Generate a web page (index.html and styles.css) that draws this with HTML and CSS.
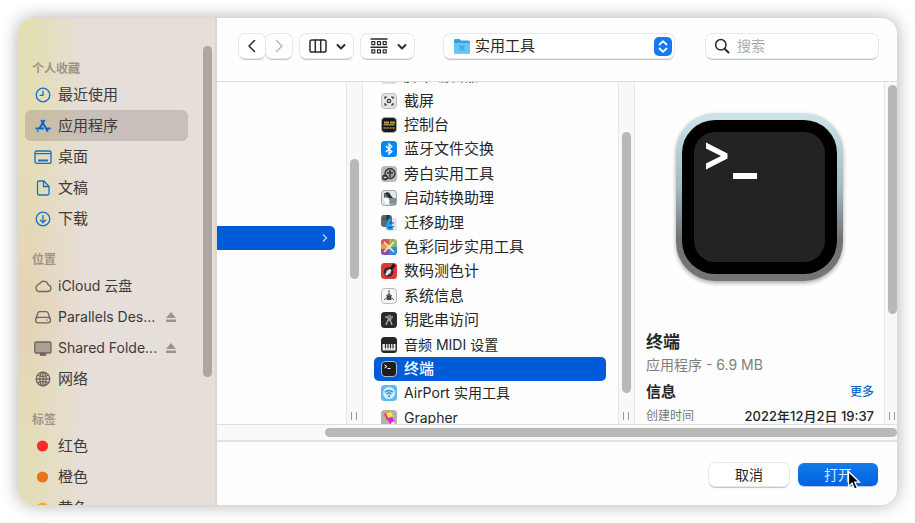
FILE: index.html
```
<!DOCTYPE html>
<html lang="zh-CN">
<head>
<meta charset="utf-8">
<title>打开</title>
<link rel="stylesheet" href="styles.css">
</head>
<body>
<div class="dialog">
  <aside class="sidebar">
    <nav class="places">
      <h2>个人收藏</h2>
      <ul>
        <li><a href="#"><svg class="blue" viewBox="0 0 18 18"><circle cx="9" cy="9" r="6.8"/><path d="M9 4.8V9.4H5.6"/></svg><span>最近使用</span></a></li>
        <li><a href="#" class="current"><svg class="blue" viewBox="0 0 18 18"><path d="M7.200 3 13.900 14.800M10.500 3 5.400 11.600M1.600 11.400H9.800M13 11.400h3.600M4 13.700l-.6 1"/></svg><span>应用程序</span></a></li>
        <li><a href="#"><svg class="blue" viewBox="0 0 18 18"><rect x="1" y="3" width="16" height="12.4" rx="2"/><path d="M1 5.6h16"/><path stroke-width="2" d="M4 12.4h10"/></svg><span>桌面</span></a></li>
        <li><a href="#"><svg class="blue" viewBox="0 0 18 18"><path d="M5 2h4.8L15 7.2V14.500a1.500 1.500 0 0 1-1.500 1.500H5a1.500 1.500 0 0 1-1.500-1.500v-11A1.500 1.500 0 0 1 5 2zM9.500 2.200V7.500h5.300"/></svg><span>文稿</span></a></li>
        <li><a href="#"><svg class="blue" viewBox="0 0 18 18"><circle cx="9" cy="9" r="6.8"/><path d="M9 5v7.500M6 9.700l3 3 3-3"/></svg><span>下载</span></a></li>
      </ul>
      <h2>位置</h2>
      <ul>
        <li><a href="#"><svg class="gray" viewBox="0 0 18 18"><path d="M4.500 14.500A3.600 3.600 0 0 1 3.600 8 3.200 3.200 0 0 1 6 6.300a4.500 4.500 0 0 1 8.200 1.500A3.400 3.400 0 0 1 14 14.500z"/></svg><span class="latin">iCloud 云盘</span></a></li>
        <li><a href="#"><svg class="gray" viewBox="0 0 18 18"><path d="M2 10.500 4 4.800A1.800 1.800 0 0 1 5.700 3.600h6.600A1.800 1.800 0 0 1 14 4.800l2 5.700"/><rect x="1.600" y="9.400" width="14.800" height="5.400" rx="2.400"/><path d="M12.500 12.100h1.200"/></svg><span class="latin">Parallels Des...</span><svg class="eject" viewBox="0 0 12 12"><path d="M6 1l5 6H1zM1 8.500h10v2.500H1z"/></svg></a></li>
        <li><a href="#"><svg class="gray" viewBox="0 0 18 18"><rect x=".8" y="3" width="16.200" height="11" rx="1.200" fill="#aaa194"/><path fill="#645e56" d="M6.500 14.500h5v1.700h-5z"/></svg><span class="latin">Shared Folde...</span><svg class="eject" viewBox="0 0 12 12"><path d="M6 1l5 6H1zM1 8.500h10v2.500H1z"/></svg></a></li>
        <li><a href="#"><svg class="gray" viewBox="0 0 18 18"><circle cx="9" cy="9" r="6.800"/><ellipse cx="9" cy="9" rx="3.200" ry="6.800"/><path d="M9 2v14M2.200 9h13.600M3.800 5.200c3 1.600 7.400 1.600 10.400 0M3.800 12.800c3-1.600 7.400-1.600 10.400 0"/></svg><span>网络</span></a></li>
      </ul>
      <h2>标签</h2>
      <ul>
        <li><a href="#"><svg viewBox="0 0 18 18"><circle cx="8.500" cy="9" r="5.600" fill="#fb2c24"/></svg><span>红色</span></a></li>
        <li><a href="#"><svg viewBox="0 0 18 18"><circle cx="8.500" cy="9" r="5.600" fill="#e8751c"/></svg><span>橙色</span></a></li>
        <li><a href="#"><svg viewBox="0 0 18 18"><circle cx="8.500" cy="9" r="5.600" fill="#edb125"/></svg><span>黄色</span></a></li>
      </ul>
    </nav>
    <div class="side-scroll"><div class="thumb"></div></div>
  </aside>

  <main>
    <header class="toolbar">
      <div class="history">
        <button type="button" aria-label="后退"><svg width="12" height="16" viewBox="0 0 12 16"><path d="M8.500 2.500 3 8l5.500 5.500"/></svg></button>
        <button type="button" aria-label="前进" disabled><svg width="12" height="16" viewBox="0 0 12 16"><path d="M3.500 2.500 9 8l-5.500 5.500"/></svg></button>
      </div>
      <button type="button" class="view" aria-label="分栏显示"><svg width="18" height="16" viewBox="0 0 18 16"><rect x="1" y="2" width="16" height="12" rx="1.800"/><path d="M6.300 2v12M11.700 2v12"/></svg><svg width="10" height="16" viewBox="0 0 10 16"><path stroke-width="2" d="M1.500 7 5 10.500 8.500 7"/></svg></button>
      <button type="button" class="view" aria-label="分组"><svg width="18" height="18" viewBox="0 0 18 18"><path d="M1 2h16M1 10.200h16"/><g stroke-width="1.200"><rect x="1.800" y="4.600" width="3" height="3"/><rect x="7.500" y="4.600" width="3" height="3"/><rect x="13.200" y="4.600" width="3" height="3"/><rect x="1.800" y="12.800" width="3" height="3"/><rect x="7.500" y="12.800" width="3" height="3"/><rect x="13.200" y="12.800" width="3" height="3"/></g></svg><svg width="10" height="16" viewBox="0 0 10 16"><path stroke-width="2" d="M1.500 7 5 10.500 8.500 7"/></svg></button>
      <div class="path">
        <select aria-label="位置"><option>实用工具</option></select>
        <svg class="folder" width="18" height="18" viewBox="0 0 18 18"><path fill="#37a3d8" d="M1 3.500A1.500 1.500 0 0 1 2.500 2h4l1.500 1.500h7.500A1.500 1.500 0 0 1 17 5v10.500a1 1 0 0 1-1 1H2a1 1 0 0 1-1-1z"/><path fill="#67c5f5" d="M1 6h16v9.500a1 1 0 0 1-1 1H2a1 1 0 0 1-1-1z"/><path stroke="#3b9dd3" stroke-width="1.200" fill="none" d="m6.500 8.500 5 5M11.500 8.500l-5 5"/></svg>
        <svg class="updown" width="18" height="19" viewBox="0 0 18 19"><rect width="18" height="19" rx="5" fill="#157af0"/><path fill="none" stroke="#fff" stroke-width="1.800" stroke-linecap="round" stroke-linejoin="round" d="M5.500 7.500 9 4.200l3.500 3.300M5.500 11.500 9 14.800l3.500-3.300"/></svg>
      </div>
      <label class="search">
        <svg width="16" height="16" viewBox="0 0 16 16"><circle cx="6.800" cy="6.800" r="5.200"/><path stroke-width="2" d="m10.700 10.700 3.800 3.800"/></svg>
        <input type="search" placeholder="搜索" aria-label="搜索">
      </label>
    </header>

    <section class="columns">
      <div class="column"><a href="#" class="parent" aria-label="实用工具"><svg width="6" height="10" viewBox="0 0 6 10"><path d="m1 1.500 3.500 3.500L1 8.500"/></svg></a></div>
      <div class="track one"><div class="thumb"></div><i class="grip"></i></div>
      <div class="column">
        <ul class="files">
          <li><svg viewBox="0 0 16 16"><rect width="16" height="16" rx="3.500" fill="#ddd"/><path stroke="#444" stroke-width="1.500" d="M10 3 6 12M6 13l5-1"/></svg><span>脚本编辑器</span></li>
          <li><svg viewBox="0 0 16 16"><rect x=".5" y=".5" width="15" height="15" rx="3.500" fill="#e6e6e6" stroke="#bbb"/><path fill="none" stroke="#333" stroke-width="1.200" d="M4 6V4h2M10 4h2v2M12 10v2h-2M6 12H4v-2"/><circle cx="8" cy="8" r="1.700" fill="none" stroke="#333" stroke-width="1.200"/></svg><span>截屏</span></li>
          <li><svg viewBox="0 0 16 16"><rect x=".5" y=".5" width="15" height="15" rx="3.500" fill="#171717" stroke="#a4acb0"/><path stroke="#c79b4a" stroke-width="2" stroke-dasharray="5 1" d="M3 5.500h11"/><path stroke="#e5c267" d="M2.500 7.800h11"/><path stroke="#ba9c57" stroke-width="1.500" stroke-dasharray="2 1" d="M2.500 11h11"/></svg><span>控制台</span></li>
          <li><svg viewBox="0 0 16 16"><rect width="16" height="16" rx="3.500" fill="#0787f8"/><path fill="none" stroke="#fff" stroke-width="1.300" d="m4.800 5 6 5.500L8 13V3l2.800 2.500-6 5.500"/></svg><span>蓝牙文件交换</span></li>
          <li><svg viewBox="0 0 16 16"><rect width="16" height="16" rx="3.500" fill="#b9bcbe"/><circle cx="9" cy="7.500" r="5" fill="#a2a6a9" stroke="#333" stroke-width="1.300"/><circle cx="9" cy="5" r="1" fill="#222"/><path fill="none" stroke="#222" stroke-width="1.200" d="M6 6.800h6M9 6.800V11"/><circle cx="4" cy="11.500" r="2.500" fill="#555" stroke="#222"/><path stroke="#ddd" d="M2.800 11.500h2.400"/></svg><span>旁白实用工具</span></li>
          <li><svg viewBox="0 0 16 16"><rect x=".5" y=".5" width="15" height="15" rx="3" fill="#e0e5e8" stroke="#a1a8ac"/><path fill="#556878" d="M3 3h6v5H3z"/><path fill="#232b31" d="m4 3 3-1 5 6-2 2z"/><path fill="#7d8e99" d="M8 8h7v5H8z"/><path fill="#fff" d="m2 9 3-2 4 4-3 3z"/><path stroke="#4c5960" d="M9 14h6"/></svg><span>启动转换助理</span></li>
          <li><svg viewBox="0 0 16 16"><rect x="4" y="3" width="12" height="13" rx="3" fill="#dce5eb"/><rect width="11" height="12" rx="3" fill="#5b6b76"/><path fill="#2e3a43" d="M5 0h4L8 6h2v5H6z"/><path fill="#239cf0" d="M7 4h3l-1 5h2l1 6H9c-3 0-4-2-4-5z"/><path fill="none" stroke="#1a3d67" d="M3 3v2M12 7v2M7 12c2 1 4 1 6-1"/></svg><span>迁移助理</span></li>
          <li><svg viewBox="0 0 16 16"><rect width="16" height="16" rx="3.500" fill="#8fb75a"/><path fill="#e85145" d="M0 8V3.500A3.500 3.500 0 0 1 3.500 0H8v8z"/><path fill="#8750ab" d="M8 8H0v4.500A3.500 3.500 0 0 0 3.500 16H8z"/><path fill="#2b8ddb" d="M8 8h8v4.500a3.500 3.500 0 0 1-3.500 3.500H8z"/><path fill="#f49c39" d="M0 5h6v5H0z"/><path stroke="#eee" stroke-width="1.600" d="m3 3 10 10M13 3 3 13"/><circle cx="8" cy="8" r="2.300" fill="#e9dfae"/></svg><span>色彩同步实用工具</span></li>
          <li><svg viewBox="0 0 16 16"><rect width="16" height="16" rx="3.500" fill="#dc3932"/><circle cx="7.500" cy="9" r="4.800" fill="#38292b"/><circle cx="7.500" cy="9" r="2.500" fill="#8c8f92"/><path stroke="#eee" stroke-width="2.500" d="m5 12 6-7"/><path stroke="#1c1c1c" stroke-width="3.200" d="m9.500 6.500 4-5"/></svg><span>数码测色计</span></li>
          <li><svg viewBox="0 0 16 16"><rect x=".5" y=".5" width="15" height="15" rx="3.500" fill="#f5f5f5" stroke="#bbb"/><path fill="none" stroke="#555" d="M8 2v5M5 8l3-2 3 2M5 10l-2 2M11 10l2 2"/><path fill="#444" d="M5.500 12V9.500a2.500 2.500 0 0 1 5 0V12z"/></svg><span>系统信息</span></li>
          <li><svg viewBox="0 0 16 16"><rect width="16" height="16" rx="3.500" fill="#292b2d"/><path fill="none" stroke="#9da3a4" stroke-width="1.500" d="M4 5h8M5 13l2-5M11 13 9 8"/><path fill="#9da3a4" d="M6 5h5l-1 4H7z"/><circle cx="8.500" cy="4.500" r="2" fill="#777e80"/></svg><span>钥匙串访问</span></li>
          <li><svg viewBox="0 0 16 16"><rect width="16" height="16" rx="3.500" fill="#252525"/><path fill="#eee" d="M1.500 7h13v6.500h-13z"/><path stroke="#252525" stroke-width="1.200" d="M4.500 7v4M7 7v4M9.500 7v4M12 7v4"/><path stroke="#777" stroke-width=".5" d="M4.500 11v2.500M7 11v2.500M9.500 11v2.500M12 11v2.500"/></svg><span class="latin">音频 MIDI 设置</span></li>
          <li class="selected"><svg viewBox="0 0 16 16"><rect x=".5" y=".5" width="15" height="15" rx="3.500" fill="#1e1e1e" stroke="#aebbc4"/><path fill="none" stroke="#fff" d="m3.500 4 2.500 1.500L3.500 7M6.500 7.500h3"/></svg><span>终端</span></li>
          <li><svg viewBox="0 0 16 16"><rect width="16" height="16" rx="3.500" fill="#61b9ee"/><circle cx="8" cy="8" r="6" fill="#d5effb"/><path fill="none" stroke="#2d8edb" stroke-width="1.300" d="M3.800 7.200a6 6 0 0 1 8.400 0M5.500 9.200a3.600 3.600 0 0 1 5 0"/><circle cx="8" cy="11.200" r="1.100" fill="#2d8edb"/></svg><span class="latin">AirPort 实用工具</span></li>
          <li><svg viewBox="0 0 16 16"><rect width="16" height="16" rx="3.500" fill="#b8afa6"/><path fill="#ed315f" d="m3 4 4-2 3 5-4 3z"/><path fill="#f9e936" d="m5 3 5-1 2 4-5 2z"/><path fill="#df22da" d="m6 9 5-2 3 5-4 3z"/><path fill="#fff" d="m10 13 3-2 1 4h-4z"/></svg><span class="latin">Grapher</span></li>
        </ul>
      </div>
      <div class="track two"><div class="thumb"></div><i class="grip"></i></div>
      <article class="preview">
        <svg class="app-icon" width="184" height="184" viewBox="0 0 184 184">
          <defs>
            <linearGradient id="rim" x2="0" y2="1"><stop offset="0" stop-color="#cfe5ec"/><stop offset=".45" stop-color="#a3b9c1"/><stop offset=".75" stop-color="#707374"/><stop offset="1" stop-color="#777475"/></linearGradient>
          </defs>
          <rect class="rim" x="8" y="8" width="167" height="168" rx="39" fill="url(#rim)"/>
          <rect x="14" y="15" width="155" height="154" rx="33"/>
          <rect x="26" y="27" width="131" height="130" rx="21" fill="#232323"/>
          <path fill="#fff" d="M38 37.500 59.500 48.500v5L38 64.500V58.500L53 51 38 43.500zM65 68h24v6H65z"/>
        </svg>
        <h1>终端</h1>
        <p class="kind">应用程序 - 6.9 MB</p>
        <div class="info"><h3>信息</h3><a href="#">更多</a></div>
        <dl><dt>创建时间</dt><dd>2022年12月2日 19:37</dd></dl>
      </article>
      <div class="track three"><div class="thumb"></div><i class="grip"></i></div>
    </section>
    <div class="hscroll"><div class="thumb"></div></div>

    <footer>
      <button type="button">取消</button>
      <button type="button" class="primary">打开<svg class="pointer" width="14" height="22" viewBox="0 0 14 22"><path d="M1.500 1.500v15l3.500-3.300 2.600 6 2.800-1.200-2.600-5.800h4.700z"/></svg></button>
    </footer>
  </main>
</div>
</body>
</html>
```
FILE: styles.css
```
* { box-sizing: border-box; }

body {
  margin: 0;
  height: 100vh;
  padding: 18px;
  background: #fff;
  color: #262626;
  font: 15px/24px Inter, "Noto Sans CJK SC", sans-serif;
}

h1, h2, h3, p, ul, dl, dd { margin: 0; padding: 0; }
ul { list-style: none; }
a { color: inherit; text-decoration: none; }

button, input, select {
  font: inherit;
  font-size: 14px;
  color: inherit;
}

.dialog {
  display: flex;
  height: 100%;
  border-radius: 16px;
  background: #fefefe;
  box-shadow: 0 0 18px rgba(0, 0, 0, .32);
  overflow: hidden;
}

.latin { font-size: 14px; }
.thumb { border-radius: 5px; background: #b8b8b8; }

/* Sidebar */
.sidebar {
  flex: 0 0 199px;
  display: flex;
  border-right: 2px solid #dbd4cf;
  overflow: hidden;
  background:
    linear-gradient(90deg, transparent 8%, #e6ded8 34%),
    linear-gradient(#e2dfb4, #e5dcb8 30%, #e5d3b8 62%, #e4ddb9 85%);
}

.places {
  flex: 1;
  padding: 25px 15px 0 7px;
}

.places h2 {
  padding: 16px 7px 0;
  color: #9d9487;
  font-size: 12px;
  font-weight: 700;
  line-height: 20px;
}

.places a {
  display: flex;
  align-items: center;
  gap: 6px;
  height: 31px;
  padding: 0 11px 0 9px;
  border-radius: 6px;
  color: #3e3a37;
  white-space: nowrap;
}

.places a.current { background: rgba(110, 90, 90, .24); }
.places svg { flex: none; width: 18px; height: 18px; fill: none; stroke-width: 1.3px; }
.blue { stroke: #176fc9; }
.gray { stroke: #6d665e; }
.places .current svg { stroke-width: 2px; stroke: #0c62d2; }
.places .eject { width: 12px; height: 12px; margin-left: auto; fill: #9c938f; }

.side-scroll { flex: 0 0 12px; padding-right: 3px; }
.side-scroll .thumb { height: 331px; margin-top: 28px; background: #aba6a1; }

/* Toolbar */
main {
  flex: 1;
  min-width: 0;
  display: flex;
  flex-direction: column;
}

.toolbar {
  display: flex;
  gap: 8px;
  padding: 16px 19px 23px 22px;
  border-bottom: 1px solid #dedede;
}

.toolbar button, .path, .search, footer button {
  height: 24px;
  border: 0;
  border-radius: 6px;
  background: #fff;
  box-shadow: 0 0 0 1px #e8e8e8, 0 2px 1px #c4c4c4;
}

.toolbar button { display: flex; align-items: center; justify-content: center; padding: 0; }
.toolbar button svg, .search svg {
  flex: none;
  fill: none;
  stroke: #2b2b2b;
  stroke-width: 1.5px;
  stroke-linecap: round;
  stroke-linejoin: round;
}
.history { display: flex; gap: 1px; }
.history button { width: 26px; }
.toolbar button:disabled svg { stroke: #b9b9b9; }
.toolbar .view { width: 53px; gap: 9px; padding-left: 2px; }

.path {
  flex: 1;
  display: grid;
  align-items: center;
  margin: 0 24px 0 22px;
}
.path > * { grid-area: 1 / 1; }
.path select {
  width: 100%;
  height: 24px;
  padding: 0 28px 0 31px;
  border: 0;
  background: none;
  appearance: none;
  font-size: 15px;
}
.folder { margin-left: 9px; pointer-events: none; }
.updown { justify-self: end; margin-right: 2px; pointer-events: none; }

.search {
  flex: none;
  width: 172px;
  display: flex;
  align-items: center;
  gap: 7px;
  padding: 0 8px;
}
.search input { flex: 1; min-width: 0; padding: 0; border: 0; background: none; outline: 0; }
.search input::placeholder { color: #ababab; }

/* Columns */
.columns {
  flex: 1;
  min-height: 0;
  display: grid;
  grid-template-columns: minmax(0, 129fr) 17px minmax(0, 255fr) 17px minmax(0, 249fr) 13px;
  grid-template-rows: minmax(0, 1fr);
  overflow: hidden;
}
.column { overflow: hidden; }
.preview { overflow: hidden; padding: 23px 10px 0 11px; }

.parent {
  display: flex;
  align-items: center;
  justify-content: flex-end;
  height: 24px;
  margin: 144px 11px 0 0;
  padding-right: 7px;
  border-radius: 0 5px 5px 0;
  background: #005bd8;
}
.parent svg { fill: none; stroke: #b7d4ff; stroke-width: 1.3px; }

.track {
  display: flex;
  flex-direction: column;
  justify-content: space-between;
  padding: 0 3px 4px;
  border: solid #e6e6e6;
  border-width: 0 1px;
  background: #f8f8f8;
}
.track .thumb { width: 9px; }
.one .thumb { height: 120px; margin-top: 77px; }
.two .thumb { height: 261px; margin-top: 50px; }
.three { padding-right: 0; border-right: 0; }
.three .thumb { height: 229px; margin-top: 3px; }
.grip {
  width: 6px;
  height: 8px;
  margin: 0 1px;
  border: solid #999;
  border-width: 0 1px;
}

.files {
  display: grid;
  grid-auto-rows: 1fr;
  height: 366px;
  margin: -18px 12px 0 11px;
}
.files li {
  display: flex;
  align-items: center;
  gap: 7px;
  min-height: 0;
  padding: 0 7px;
  border-radius: 5px;
  white-space: nowrap;
}
.files svg { flex: none; width: 16px; height: 16px; }
.files .selected { background: #005bd8; color: #fff; font-weight: 500; }

/* Preview */
.app-icon { display: block; margin: 0 auto 41px; }
.rim { filter: drop-shadow(0 2px 2px rgba(0, 0, 0, .35)); }
.preview h1 { font-size: 17px; line-height: 24px; }
.kind { color: #808080; font-size: 14px; line-height: 22px; }
.info, .preview dl { display: flex; justify-content: space-between; }
.info { margin-top: 4px; }
.info h3 { font-size: 15px; line-height: 24px; }
.info a { color: #1666c4; font-size: 12px; font-weight: 500; }
.preview dl { font-size: 12px; white-space: nowrap; }
.preview dt { color: #777; }
.preview dd { font-size: 13px; font-weight: 500; }

.hscroll {
  padding: 3px 0 3px 108px;
  border-top: 1px solid #dedede;
  background: #f9f9f9;
}
.hscroll .thumb { height: 9px; }

/* Footer */
footer {
  display: flex;
  justify-content: flex-end;
  gap: 9px;
  padding: 21px 19px 19px;
  border-top: 2px solid #e2e2e2;
}
footer button { width: 80px; height: 23px; padding: 0; line-height: 22px; }
footer .primary {
  position: relative;
  background: linear-gradient(#147be9, #0062e0);
  box-shadow: 0 1px 1px #b4c8e2;
  color: #d8e9ff;
}
.pointer { position: absolute; left: 49px; top: 7px; stroke: #fff; stroke-width: 1.3px; }
```
